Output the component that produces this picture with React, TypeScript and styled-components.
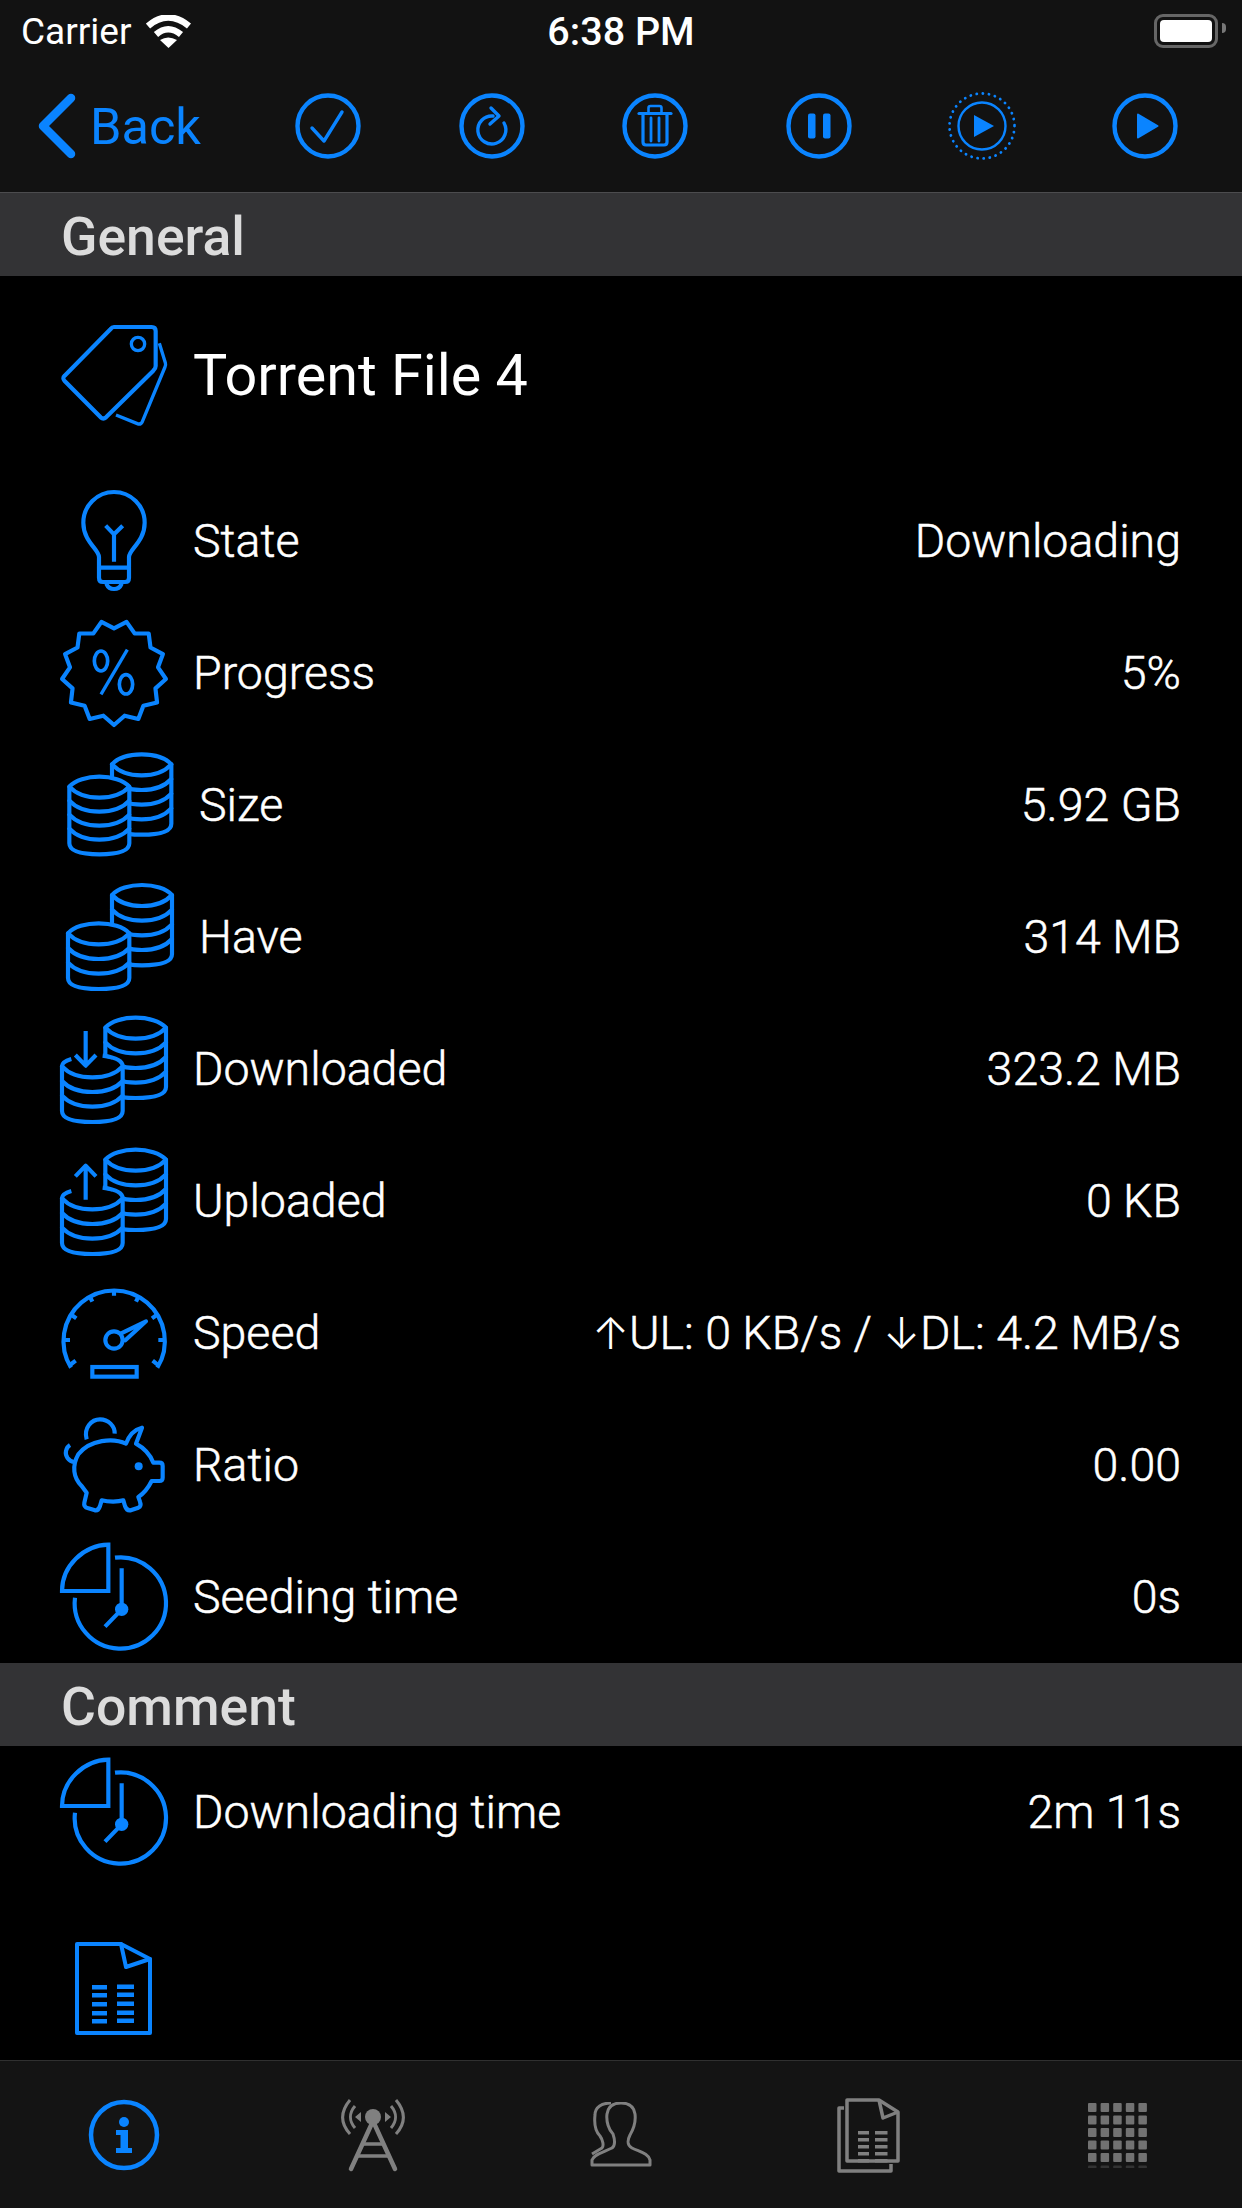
import React from 'react'
import styled, { createGlobalStyle } from 'styled-components'

const BLUE = '#0a84ff'
const GRAY = '#808080'

const GlobalStyle = createGlobalStyle`
    html, body {
        margin: 0;
        padding: 0;
        background: #000;
    }
    * {
        box-sizing: border-box;
    }
`

const Screen = styled.div`
    width: 1242px;
    height: 2208px;
    display: flex;
    flex-direction: column;
    overflow: hidden;
    background: #000;
    color: #fff;
    font-family: Roboto, 'Noto Sans', sans-serif;
`

const TopBars = styled.header`
    background: #121212;
    border-bottom: 1px solid #4c4c4e;
    height: 193px;
    flex: none;
`

const StatusBar = styled.div`
    height: 62px;
    padding: 0 18px;
    display: grid;
    grid-template-columns: 1fr auto 1fr;
    align-items: center;
`

const Carrier = styled.div`
    display: flex;
    align-items: center;
    gap: 15px;
    padding-left: 3px;
    font-size: 37px;
`

const Clock = styled.div`
    font-size: 39.5px;
    font-weight: 500;
`

const Battery = styled.div`
    position: relative;
    justify-self: end;
    width: 64px;
    height: 34px;
    margin-right: 6px;
    padding: 3px;
    border: 3px solid #666;
    border-radius: 9px;
    &::after {
        content: '';
        position: absolute;
        right: -11px;
        top: 6px;
        width: 4px;
        height: 10px;
        border-radius: 0 4px 4px 0;
        background: #777;
    }
`

const BatteryFill = styled.div`
    width: 100%;
    height: 100%;
    background: #fff;
    border-radius: 4px;
`

const NavBar = styled.nav`
    height: 130px;
    padding: 0 15px 2px 38px;
    display: flex;
    align-items: center;
`

const BackLink = styled.div`
    flex: 1;
    display: flex;
    align-items: center;
    gap: 14px;
    color: ${BLUE};
    font-size: 50.5px;
`

const ActionSlot = styled.div`
    width: 163.4px;
    display: flex;
    justify-content: center;
`

const SectionHeader = styled.h2`
    margin: 0;
    height: 83px;
    flex: none;
    padding: 4px 0 0 61px;
    display: flex;
    align-items: center;
    background: #333335;
    color: #dcdcdc;
    font-size: 53.5px;
    font-weight: 500;
`

const TitleRow = styled.div`
    height: 132px;
    margin: 33px 0 34px;
    padding-left: 40px;
    display: flex;
    align-items: center;
`

const TitleText = styled.h1`
    margin: 0 0 0 3px;
    font-size: 57.5px;
    font-weight: 400;
`

const Row = styled.div<{ $gap?: number }>`
    height: 132px;
    flex: none;
    padding: 0 61px 0 40px;
    display: flex;
    align-items: center;
    margin-top: ${p => p.$gap ?? 0}px;
`

const Label = styled.span<{ $inset?: boolean }>`
    margin-left: ${p => (p.$inset ? 9 : 3)}px;
    flex: 1;
    font-size: 46.5px;
    font-weight: 300;
    -webkit-text-stroke: 0.5px #fff;
`

const Value = styled.span`
    font-size: 46.5px;
    font-weight: 300;
    -webkit-text-stroke: 0.5px #fff;
`

const Arrow = styled.span`
    font-family: Inter, 'DejaVu Sans', sans-serif;
    font-size: 44px;
    -webkit-text-stroke: 0;
`

const Content = styled.main`
    flex: 1;
    display: flex;
    flex-direction: column;
`

const TabBar = styled.footer`
    height: 148px;
    flex: none;
    display: flex;
    align-items: center;
    background: #141414;
    border-top: 1px solid #303030;
`

const TabSlot = styled.div`
    flex: 1;
    display: flex;
    justify-content: center;
`

const Blue = styled.svg.attrs({ fill: 'none', stroke: BLUE, strokeLinecap: 'round', strokeLinejoin: 'round' })`
    display: block;
    flex: none;
`

const Gray = styled.svg.attrs({ fill: 'none', stroke: GRAY, strokeLinejoin: 'round' })`
    display: block;
    flex: none;
`

const ListIcon = ({ children, sw = 12.5 }: { children: React.ReactNode; sw?: number }) => (
    <Blue width={150} height={132} viewBox="0 0 450 396" strokeWidth={sw}>
        {children}
    </Blue>
)

const NavIcon = ({ children, ring = true }: { children: React.ReactNode; ring?: boolean }) => (
    <Blue width={80} height={80} viewBox="-40 -40 80 80" strokeWidth={4.4}>
        {ring && <circle r={30.5} />}
        {children}
    </Blue>
)

const WifiIcon = () => (
    <svg width={45} height={33} viewBox="0 0 45 33" style={{ display: 'block' }} fill="none" stroke="#fff" strokeWidth={6.5}>
        <path d="M2 11 Q22 -6 43 11" />
        <path d="M10 19.5 Q22 9 35 19.5" />
        <path d="M14 25 Q22 20 31 25 L22.5 33 Z" fill="#fff" stroke="none" />
    </svg>
)

const CheckIcon = () => (
    <NavIcon>
        <path d="M-16 2 L-4 15 L14 -14" strokeWidth={3.4} />
    </NavIcon>
)

const RefreshIcon = () => (
    <NavIcon>
        <path d="M1 -10 A14 14 0 1 0 12 -3" strokeWidth={3.4} />
        <path d="M-1 -18 L7 -10 L-2 -2" strokeWidth={3.4} />
    </NavIcon>
)

const TrashIcon = () => (
    <NavIcon>
        <path d="M-16 -12.5 H16" strokeWidth={3.2} />
        <path d="M-6.5 -13 V-18 Q-6.5 -20 -4.5 -20 H4.5 Q6.5 -20 6.5 -18 V-13" strokeWidth={2.6} />
        <path d="M-12 -12 V16 Q-12 19 -9 19 H9 Q12 19 12 16 V-12" strokeWidth={3.2} />
        <path d="M-4 -8 V15 M4 -8 V15" strokeWidth={2.8} />
    </NavIcon>
)

const PauseIcon = () => (
    <NavIcon>
        <rect x={-11} y={-12.5} width={7.5} height={25} rx={2} fill={BLUE} stroke="none" />
        <rect x={4} y={-12.5} width={7.5} height={25} rx={2} fill={BLUE} stroke="none" />
    </NavIcon>
)

const ResumeNowIcon = () => (
    <NavIcon ring={false}>
        <circle r={32.5} strokeWidth={2.8} strokeDasharray="0.1 6.05" />
        <circle r={23.5} strokeWidth={2.4} />
        <path d="M-8 -11 L12 0 L-8 11 Z" fill={BLUE} stroke="none" />
    </NavIcon>
)

const PlayIcon = () => (
    <NavIcon>
        <path d="M-7 -11.5 L12.5 0 L-7 11.5 Z" fill={BLUE} strokeWidth={2} />
    </NavIcon>
)

const TagIcon = () => (
    <ListIcon>
        <g transform="translate(0 -24)">
            <path d="M222 78 H335 Q347 78 347 90 V195 Q347 203 340 209 L198 349 Q190 356 182 349 L74 240 Q66 231 74 224 L212 84 Q216 78 222 78 Z" />
            <circle cx={294} cy={129} r={20} strokeWidth={10} />
            <path d="M358 127 L376 185 Q378 192 375 198 L307 362 Q302 372 292 368 L228 342" strokeWidth={10} strokeLinecap="butt" />
        </g>
    </ListIcon>
)

const BulbIcon = () => (
    <ListIcon>
        <g transform="translate(0 -522)">
            <path d="M177 800 V768 C177 745 130 722 130 665 A92 92 0 0 1 314 665 C314 722 267 745 267 768 V800" />
            <path d="M177 800 H267 V830 Q267 843 255 843 H189 Q177 843 177 830 Z" />
            <path d="M200 850 Q206 864 222 864 Q238 864 244 850" />
            <path d="M222 782 V700 M197 674 L222 700 L248 674" strokeLinecap="butt" />
        </g>
    </ListIcon>
)

const starPoints = Array.from({ length: 26 }, (_, i) => {
    const angle = (i * Math.PI) / 13
    const radius = i % 2 === 0 ? 157 : 133
    return `${222 + radius * Math.sin(angle)},${197 + radius * Math.cos(angle)}`
}).join(' ')

const ProgressIcon = () => (
    <ListIcon>
        <polygon points={starPoints} />
        <ellipse cx={183} cy={162} rx={20} ry={30} strokeWidth={11} />
        <ellipse cx={258} cy={232} rx={20} ry={29} strokeWidth={11} />
        <path d="M262 128 L183 262" strokeWidth={10} strokeLinecap="butt" />
    </ListIcon>
)

type CoinsProps = { l: number; r: number; top: number; layers: number; step?: number; open?: boolean }

// one stack of coins, the silhouette is filled so it hides the stack behind it
const Coins = ({ l, r, top, layers, step = 44, open }: CoinsProps) => {
    const mid = (l + r) / 2
    const bottom = top + layers * step + 2
    const hump = `C${l + 35} ${top - 40} ${r - 35} ${top - 40} ${r} ${top}`
    return (
        <>
            <path
                d={`M${l} ${top} ${hump} V${bottom} Q${r} ${bottom + 33} ${mid} ${bottom + 33} Q${l} ${bottom + 33} ${l} ${bottom} Z`}
                fill="#000"
                stroke={open ? 'none' : BLUE}
            />
            {open && (
                <path
                    d={`M${l + 28} ${top - 22} Q${l} ${top - 14} ${l} ${top} V${bottom} Q${l} ${bottom + 33} ${mid} ${bottom + 33} Q${r} ${bottom + 33} ${r} ${bottom} V${top} Q${r} ${top - 24} ${l + 122} ${top - 32}`}
                    strokeLinecap="butt"
                />
            )}
            {Array.from({ length: layers }, (_, i) => {
                const y = top + i * step
                return <path key={i} d={`M${l} ${y} C${l + 40} ${y + 44} ${r - 40} ${y + 44} ${r} ${y}`} />
            })}
        </>
    )
}

const SizeIcon = () => (
    <ListIcon>
        <Coins l={216} r={394} top={76} layers={4} />
        <Coins l={88} r={268} top={143} layers={4} step={42} />
    </ListIcon>
)

const HaveIcon = () => (
    <ListIcon>
        <Coins l={216} r={396} top={72} layers={4} />
        <Coins l={84} r={268} top={187} layers={3} />
    </ListIcon>
)

const DownloadedIcon = () => (
    <ListIcon>
        <Coins l={196} r={378} top={74} layers={4} />
        <Coins l={66} r={248} top={190} layers={3} open />
        <path d="M137 84 V186 M106 156 L137 188 L168 156" strokeLinecap="butt" />
    </ListIcon>
)

const UploadedIcon = () => (
    <ListIcon>
        <Coins l={196} r={378} top={74} layers={4} />
        <Coins l={66} r={248} top={190} layers={3} open />
        <path d="M137 194 V92 M106 124 L137 92 L168 124" strokeLinecap="butt" />
    </ListIcon>
)

const SpeedIcon = () => (
    <ListIcon>
        <g transform="translate(0 -18)">
            <path d="M93 320 A152 152 0 1 1 352 320" strokeLinecap="butt" />
            <path
                d="M222 90 V104 M150 108 L157 122 M95 162 L109 172 M72 237 H90 M295 108 L288 122 M350 162 L336 172 M372 237 H355 M90 312 L107 299 M354 312 L338 299"
                strokeLinecap="butt"
            />
            <circle cx={222} cy={237} r={26} />
            <path d="M242 218 L318 181 L256 238" />
            <rect x={157} y={318} width={133} height={29} strokeLinejoin="miter" />
        </g>
    </ListIcon>
)

const RatioIcon = () => (
    <ListIcon>
        <g transform="translate(0 -414)">
            <path d="M258 548 C220 530 150 535 115 580 C95 615 100 650 125 675 L140 695 L133 725 Q130 738 145 742 L165 748 Q175 750 180 735 L185 718 C205 723 235 723 250 718 L255 735 Q260 750 272 748 L295 740 Q305 735 300 722 L295 708 C315 695 325 680 335 660 H358 Q368 660 368 650 V615 Q368 605 358 605 H340 C330 580 310 560 288 548 L306 500 C285 505 268 520 258 548 Z" />
            <circle cx={296} cy={616} r={12} fill={BLUE} stroke="none" />
            <path d="M140 535 C130 500 155 475 180 475 C205 475 225 495 224 518" strokeLinecap="butt" />
            <path d="M102 603 C85 600 75 585 78 570 Q80 558 90 552" strokeLinecap="butt" />
        </g>
    </ListIcon>
)

const TimeIcon = () => (
    <ListIcon sw={12.5}>
        <g transform="translate(0 -810)">
            <path d="M205 851 V990 H66 C66 915 130 853 205 851 Z" strokeLinejoin="miter" />
            <path d="M225 890 A137 137 0 1 1 105 1010" strokeLinecap="butt" />
            <path d="M245 922 V1045 M245 1045 L195 1097" strokeLinecap="butt" />
            <circle cx={245} cy={1045} r={20} fill={BLUE} stroke="none" />
        </g>
    </ListIcon>
)

const docLines = [63, 71, 80, 89, 97]

const CommentIcon = () => (
    <Blue width={150} height={132} viewBox="0 0 150 132" strokeWidth={4} strokeLinecap="butt" strokeLinejoin="miter">
        <path d="M37 22 H81 L110 37 V111 H37 Z" />
        <path d="M81 22 L86 45 L110 37" />
        {docLines.map(y => (
            <React.Fragment key={y}>
                <rect x={52} y={y} width={15} height={4.5} fill={BLUE} stroke="none" />
                <rect x={77} y={y - 0.5} width={17} height={4.5} fill={BLUE} stroke="none" />
            </React.Fragment>
        ))}
    </Blue>
)

const InfoTab = () => (
    <Blue width={72} height={72} viewBox="-36 -36 72 72" strokeWidth={4.5}>
        <circle r={33} />
        <circle cy={-13} r={5} fill={BLUE} stroke="none" />
        <path d="M-8 -5 H4 V13 H8 V18 H-8 V13 H-3.5 V0 H-8 Z" fill={BLUE} stroke="none" />
    </Blue>
)

const TowerTab = () => (
    <Gray width={64} height={76} viewBox="0 0 64 76" strokeWidth={3}>
        <circle cx={32} cy={20} r={8} fill={GRAY} stroke="none" />
        <path d="M32 24 L10 72 M32 24 L54 72" strokeWidth={4.5} strokeLinecap="round" />
        <path d="M20 47 H44 M15 59 H49" strokeWidth={3.5} />
        <path d="M9 3 C-1 15 -1 26 9 37 M55 3 C65 15 65 26 55 37" />
        <path d="M14 9 C8 16 8 24 14 31 M50 9 C56 16 56 24 50 31" />
        <path d="M20 15 L14 20 L20 25 Z M44 15 L50 20 L44 25 Z" fill={GRAY} stroke="none" />
    </Gray>
)

const PeopleTab = () => (
    <Gray width={62} height={66} viewBox="0 0 62 66" strokeWidth={3}>
        <path d="M2 63 V58 C4 52 14 50 22 46 C26 43 25 38 23 32 C19 28 16 20 17 12 C18 5 23 1 31 1 C39 1 44 5 45 12 C46 20 43 28 40 33 C37 39 37 43 42 46 C50 50 58 51 60 58 V63 Z" />
        <path d="M21 1 C12 1 5 5 5 13 C4 22 6 30 10 34 C13 38 14 44 12 46 L2 52" />
    </Gray>
)

const docTabLines = [34, 41, 48, 55, 62]

const FilesTab = () => (
    <Gray width={64} height={76} viewBox="0 0 64 76" strokeWidth={3.5} strokeLinejoin="miter">
        <path d="M10 3 H42 L61 15 V64 H10 Z" />
        <path d="M42 3 L46 21 L61 15" />
        <path d="M7 11 H2 V74 H54 V67" />
        {docTabLines.map(y => (
            <React.Fragment key={y}>
                <rect x={21} y={y} width={11} height={3.5} fill={GRAY} stroke="none" />
                <rect x={38} y={y} width={12.5} height={3.5} fill={GRAY} stroke="none" />
            </React.Fragment>
        ))}
    </Gray>
)

// the sixth row is cut off by the viewBox, only its faint top edge shows
const cells = Array.from({ length: 30 }, (_, i) => ({ x: (i % 5) * 12.6, y: Math.floor(i / 5) * 12.5 }))

const GridTab = () => (
    <svg width={61} height={64.5} viewBox="0 0 61 64.5" style={{ display: 'block', marginTop: 2 }}>
        {cells.map(c => (
            <rect
                key={`${c.x}-${c.y}`}
                x={c.x + 1}
                y={c.y}
                width={8.5}
                height={9}
                rx={1}
                fill={c.y > 60 ? '#333' : '#727272'}
            />
        ))}
    </svg>
)

type Stat = { icon: React.ReactNode; label: string; value: React.ReactNode; inset?: boolean }

const stats: Stat[] = [
    { icon: <BulbIcon />, label: 'State', value: 'Downloading' },
    { icon: <ProgressIcon />, label: 'Progress', value: '5%' },
    { icon: <SizeIcon />, label: 'Size', value: '5.92 GB', inset: true },
    { icon: <HaveIcon />, label: 'Have', value: '314 MB', inset: true },
    { icon: <DownloadedIcon />, label: 'Downloaded', value: '323.2 MB' },
    { icon: <UploadedIcon />, label: 'Uploaded', value: '0 KB' },
    {
        icon: <SpeedIcon />,
        label: 'Speed',
        value: (
            <>
                <Arrow>↑</Arrow>UL: 0 KB/s / <Arrow>↓</Arrow>DL: 4.2 MB/s
            </>
        ),
    },
    { icon: <RatioIcon />, label: 'Ratio', value: '0.00' },
    { icon: <TimeIcon />, label: 'Seeding time', value: '0s' },
]

const actions = [CheckIcon, RefreshIcon, TrashIcon, PauseIcon, ResumeNowIcon, PlayIcon]
const tabs = [InfoTab, TowerTab, PeopleTab, FilesTab, GridTab]

const App = () => {
    return (
        <Screen>
            <GlobalStyle />
            <TopBars>
                <StatusBar>
                    <Carrier>
                        Carrier
                        <WifiIcon />
                    </Carrier>
                    <Clock>6:38 PM</Clock>
                    <Battery>
                        <BatteryFill />
                    </Battery>
                </StatusBar>
                <NavBar>
                    <BackLink>
                        <Blue width={38} height={66} viewBox="0 0 38 66" strokeWidth={8.5}>
                            <path d="M33 5 L5 33 L33 61" />
                        </Blue>
                        Back
                    </BackLink>
                    {actions.map((Icon, i) => (
                        <ActionSlot key={i}>
                            <Icon />
                        </ActionSlot>
                    ))}
                </NavBar>
            </TopBars>
            <Content>
                <SectionHeader>General</SectionHeader>
                <TitleRow>
                    <TagIcon />
                    <TitleText>Torrent File 4</TitleText>
                </TitleRow>
                {stats.map(s => (
                    <Row key={s.label}>
                        {s.icon}
                        <Label $inset={s.inset}>{s.label}</Label>
                        <Value>{s.value}</Value>
                    </Row>
                ))}
                <SectionHeader>Comment</SectionHeader>
                <Row>
                    <TimeIcon />
                    <Label>Downloading time</Label>
                    <Value>2m 11s</Value>
                </Row>
                <Row $gap={44}>
                    <CommentIcon />
                </Row>
            </Content>
            <TabBar>
                {tabs.map((Icon, i) => (
                    <TabSlot key={i}>
                        <Icon />
                    </TabSlot>
                ))}
            </TabBar>
        </Screen>
    )
}

export default App
